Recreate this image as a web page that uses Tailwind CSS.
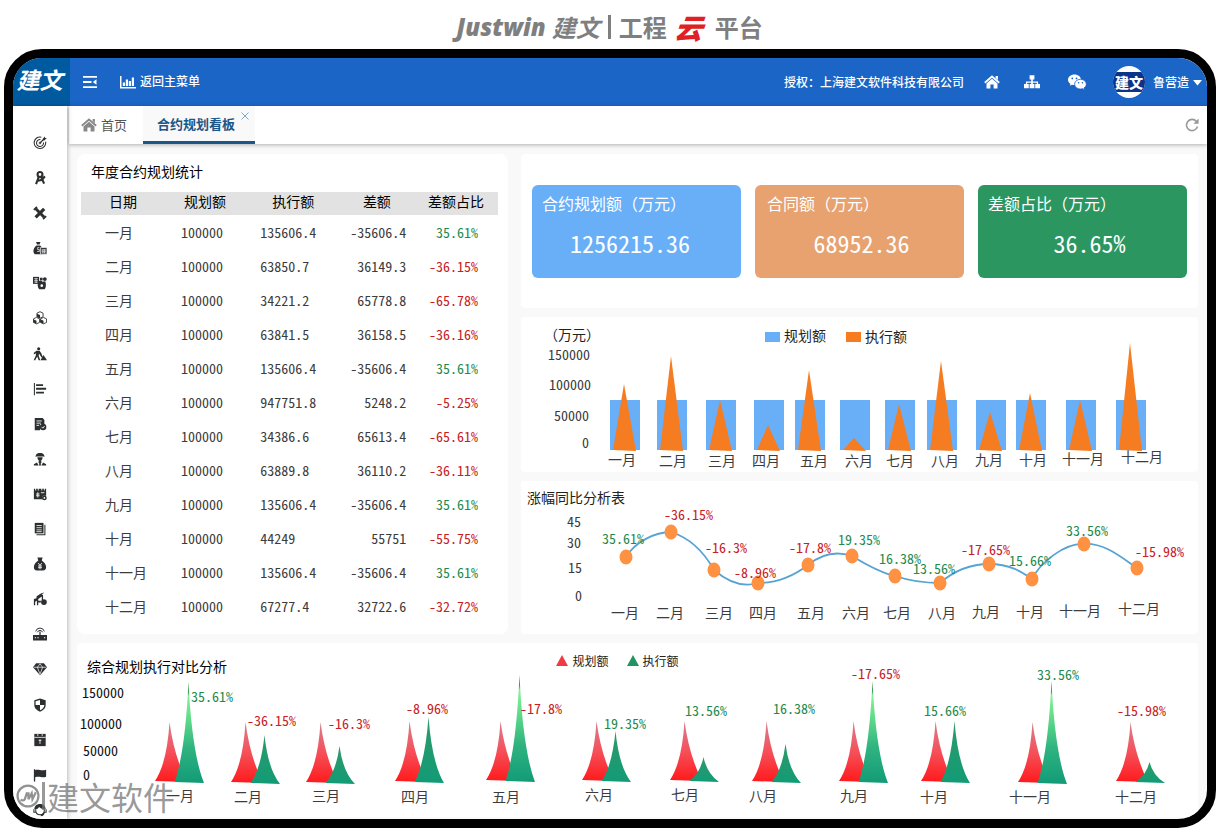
<!DOCTYPE html>
<html lang="zh-CN">
<head>
<meta charset="utf-8">
<meta name="viewport" content="width=device-width, initial-scale=1">
<title>Justwin 建文 | 工程云平台</title>
<script src="https://cdn.jsdelivr.net/npm/@tailwindcss/browser@4"></script>
</head>
<body class="flex min-h-screen flex-col bg-white font-['Noto_Sans_CJK_SC','Noto_Sans',sans-serif] text-[#333]">

<h1 class="flex h-[49px] shrink-0 items-center justify-center pt-1 pr-1 text-2xl leading-none font-bold text-[#7f7f7f]">
  <span class="font-['Open_Sans','Noto_Sans',sans-serif] font-extrabold italic">Justwin</span>
  <span class="ml-1.5 italic">建文</span>
  <span class="mx-2 h-6 w-[3px] bg-[#7f7f7f]"></span>
  <span>工程</span>
  <span class="mx-2 -skew-x-6 text-[28px] font-black text-[#e01f26] italic">云</span>
  <span class="ml-1">平台</span>
</h1>

<div class="relative mr-[7px] ml-1 flex flex-1 flex-col overflow-hidden rounded-[38px] border-[9px] border-black bg-[#f9f9f9]">

  <header class="flex h-12 shrink-0 items-center bg-[#1a65c5] text-xs font-medium text-white">
    <div class="flex h-full w-[57px] items-center justify-center bg-[#005a9f] pr-1 pb-1.5 text-[23px] leading-none font-bold italic">建文</div>
    <button class="ml-3 p-px" aria-label="折叠菜单">
      <svg class="h-3.5 w-3.5" viewBox="0 0 14 14" fill="currentColor"><path d="M0 1h14v1.800H0zM0 6.100h8.500v1.800H0zM0 11.200h14v1.800H0zM13.500 4.200v5.600L9.800 7z"/></svg>
    </button>
    <a href="#" class="ml-[22px] flex items-center gap-1">
      <svg class="h-3.5 w-4" viewBox="0 0 16 14" fill="currentColor"><path d="M0 1h1.500v11h14.500v1.500H0zM2.800 7.500h2.200V11H2.800zM5.800 4.500H8V11H5.800zM8.800 6H11v5H8.800zM11.800 2.500H14V11h-2.200z"/></svg>
      <span class="pb-0.5">返回主菜单</span>
    </a>
    <div class="ml-auto flex items-center pr-[5px]">
      <span class="pb-px">授权<span class="font-['Noto_Sans_CJK_TC',sans-serif]">：</span>上海建文软件科技有限公司</span>
      <a href="#" class="ml-5" aria-label="首页"><svg class="h-4 w-4" viewBox="0 0 16 16" fill="currentColor"><path d="M8 1.200 15.800 8 14.600 9.400 8 3.700 1.400 9.400.2 8zM11.600 2h2.300v4l-2.300-2zM8 4.700l5.500 4.700v5H9.600v-4H6.400v4H2.500v-5z"/></svg></a>
      <a href="#" class="ml-6" aria-label="组织架构"><svg class="h-4 w-4" viewBox="0 0 16 16" fill="currentColor"><path d="M5.600 1.200h4.800v4.400H8.800v1.800h5.300v2.600H16v4.300h-4.800V10h1.600V8.700h-4V10h1.600v4.300H5.600V10h1.600V8.700h-4V10h1.600v4.300H0V10h1.900V7.400h5.300V5.600H5.600z"/></svg></a>
      <a href="#" class="ml-[27px]" aria-label="微信"><svg class="h-[18px] w-5" viewBox="0 0 20 18"><path fill="#fff" d="M7.500 1.500C3.900 1.500 1 3.800 1 6.800c0 1.700.9 3.100 2.400 4.100l-.6 1.900 2.200-1.100c.8.200 1.600.3 2.500.3 3.600 0 6.500-2.300 6.500-5.200S11.100 1.500 7.500 1.500z"/><path fill="#fff" stroke="#1a65c5" stroke-width=".8" d="M13.500 6.300c-3.300 0-5.900 2.200-5.900 4.900s2.600 4.800 5.900 4.800c.7 0 1.400-.1 2-.3l2 1-.5-1.700c1.400-.9 2.300-2.300 2.300-3.800 0-2.700-2.600-4.900-5.800-4.900z"/><g fill="#1a65c5"><circle cx="5.300" cy="5.400" r=".9"/><circle cx="9.500" cy="5.400" r=".9"/><circle cx="11.600" cy="9.800" r=".8"/><circle cx="15.400" cy="9.800" r=".8"/></g></svg></a>
      <button class="ml-[26px] flex items-center gap-1">
        <span class="flex h-8 w-8 flex-col justify-center overflow-hidden rounded-full bg-white text-center">
          <span class="bg-[#0b3389] py-px text-sm leading-[18px] font-black whitespace-nowrap">建文</span>
        </span>
        <span class="ml-1 pb-px">鲁营造</span>
        <svg class="h-[7px] w-[9px]" viewBox="0 0 9 7" fill="currentColor"><path d="M0 1h9L4.500 6.500z"/></svg>
      </button>
    </div>
  </header>

  <div class="flex flex-1">
    <nav id="side" class="z-10 flex w-[54px] shrink-0 flex-col items-center justify-between bg-white pt-[30px] pb-0.5 text-[#2c2f30] shadow-[1px_0_4px_rgba(0,0,0,0.25)]" aria-label="主导航"></nav>

    <div class="ml-0.5 flex min-w-0 flex-1 flex-col">
      <div class="flex h-[38px] shrink-0 items-stretch bg-white text-[13px] shadow-[0_1px_4px_rgba(0,0,0,0.3)]">
        <a href="#" class="ml-3 flex items-center gap-1 text-[#555]">
          <svg class="h-4 w-4 text-[#888]" viewBox="0 0 16 16" fill="currentColor"><path d="M8 1.200 15.800 8 14.600 9.400 8 3.700 1.400 9.400.2 8zM11.600 2h2.300v4l-2.300-2zM8 4.700l5.500 4.700v5H9.600v-4H6.400v4H2.500v-5z"/></svg>
          <span class="pb-px">首页</span>
        </a>
        <div class="relative ml-4 flex w-28 items-center border-b-[3px] border-[#1b5788] bg-[#f9f9f9] pl-3.5 font-bold text-[#1b5788]">
          <a href="#">合约规划看板</a>
          <button class="absolute top-1.5 right-1.5" aria-label="关闭"><svg class="h-2 w-2" viewBox="0 0 8 8" stroke="#7ea8c8" fill="none"><path d="M.5.5l7 7M7.500.5l-7 7"/></svg></button>
        </div>
        <button class="mr-2 ml-auto" aria-label="刷新"><svg class="h-3.5 w-3.5" viewBox="0 0 14 14" fill="none" stroke="#999" stroke-width="1.600"><path d="M12.500 8.500A5.600 5.600 0 1 1 11.500 3.500"/><path fill="#999" stroke="none" d="M13.600.6v5.200H8.400z"/></svg></button>
      </div>

      <main class="flex flex-1 flex-col gap-[9px] pt-2.5 pr-[9px] pl-2 font-['Noto_Sans_Mono_CJK_SC','Noto_Sans_CJK_SC',monospace]">
        <div class="grid grid-cols-[431fr_677fr] gap-[13px]">

          <section class="rounded-lg bg-white px-1">
            <h2 class="flex h-[38px] items-center pb-1 pl-2.5 text-sm text-black">年度合约规划统计</h2>
            <table class="w-[417px] max-w-full table-fixed text-sm">
              <colgroup><col class="w-[24%]"><col class="w-[19%]"><col class="w-[19%]"><col class="w-[16%]"><col class="w-[22%]"></colgroup>
              <thead>
                <tr class="h-[23px] bg-[#e2e2e2] text-left leading-[19px] text-black">
                  <th class="pb-1 pl-7 font-normal">日期</th><th class="pb-1 pl-[3px] font-normal">规划额</th><th class="pb-1 pl-3 font-normal">执行额</th><th class="pb-1 pl-2 text-center font-normal">差额</th><th class="pb-1 pl-2 text-center font-normal">差额占比</th>
                </tr>
              </thead>
              <tbody id="rows"></tbody>
            </table>
          </section>

          <div class="flex flex-col gap-[9px]">
            <section class="flex h-[154px] items-center rounded bg-white px-[11px]">
              <div class="grid flex-1 grid-cols-3 gap-3.5 text-white">
                <div class="flex h-[93px] flex-col rounded-md bg-[#69aff8] px-2.5 pt-1.5"><h3 class="text-base">合约规划额（万元）</h3><p class="pt-3 pl-7 text-2xl">1256215.36</p></div>
                <div class="flex h-[93px] flex-col rounded-md bg-[#e7a270] px-3 pt-1.5"><h3 class="text-base">合同额（万元）</h3><p class="pt-3 pl-1 text-center text-2xl">68952.36</p></div>
                <div class="flex h-[93px] flex-col rounded-md bg-[#2b965f] px-2.5 pt-1.5"><h3 class="text-base">差额占比（万元）</h3><p class="pt-3 pl-3.5 text-center text-2xl">36.65%</p></div>
              </div>
            </section>
            <section class="rounded bg-white"><svg id="bars" class="block w-full overflow-visible" viewBox="521 317 677 155" role="img" aria-label="规划额与执行额"></svg></section>
            <section class="rounded bg-white">
              <h2 class="flex h-8 items-center pl-1.5 text-sm text-[#222]">涨幅同比分析表</h2>
              <svg id="line" class="block w-full overflow-visible" viewBox="521 513 677 121" role="img" aria-label="涨幅同比"></svg>
            </section>
          </div>
        </div>

        <section class="rounded bg-white">
          <div class="relative flex h-9 items-center pt-2.5 pl-2.5 text-black">
            <h2 class="text-sm">综合规划执行对比分析</h2>
            <ul class="absolute inset-x-0 top-2 flex justify-center gap-[18px] pr-10 text-xs leading-5 text-[#222]">
              <li class="flex items-center gap-1"><svg class="h-3 w-3" viewBox="0 0 12 12"><path d="M6 0l6 11H0z" fill="#f03b44"/></svg>规划额</li>
              <li class="flex items-center gap-1"><svg class="h-3 w-3" viewBox="0 0 12 12"><path d="M6 0l6 11H0z" fill="#23935f"/></svg>执行额</li>
            </ul>
          </div>
          <svg id="peaks" class="block w-full overflow-visible" viewBox="77 679 1121 138" role="img" aria-label="综合规划执行对比"></svg>
        </section>
      </main>
    </div>
  </div>

  <div class="pointer-events-none absolute bottom-[5px] left-[3px] z-20 flex items-center text-[32px] leading-9 text-[#777]/75">
    <svg class="h-6 w-6" viewBox="0 0 26 26" fill="none" stroke="#777" stroke-opacity=".8"><circle cx="13" cy="13" r="11.300" stroke-width="2.400"/><path stroke-width="2.400" d="M12 9l-2.500 7.500c-.8 1.800-3 1.500-4.500.5M13.500 9v7.500L17 10l.8 6.500L21.500 9"/></svg>
    <span class="mx-0.5 h-7 w-[3px] bg-[#777]/75"></span>
    <span>建文软件</span>
  </div>
</div>

<script>
const GREEN = '#1f8a4c', RED = '#c8201f', GREY = '#3c3c3c';
const months = ['一月','二月','三月','四月','五月','六月','七月','八月','九月','十月','十一月','十二月'];

const data = [
  ['135606.4','-35606.4','35.61%'],['63850.7','36149.3','-36.15%'],['34221.2','65778.8','-65.78%'],
  ['63841.5','36158.5','-36.16%'],['135606.4','-35606.4','35.61%'],['947751.8','5248.2','-5.25%'],
  ['34386.6','65613.4','-65.61%'],['63889.8','36110.2','-36.11%'],['135606.4','-35606.4','35.61%'],
  ['44249','55751','-55.75%'],['135606.4','-35606.4','35.61%'],['67277.4','32722.6','-32.72%']];
document.getElementById('rows').innerHTML = data.map((r, i) =>
  `<tr class="h-[34px] text-[#3c3c3c]"><td class="pl-6">${months[i]}</td><td>100000</td><td>${r[0]}</td><td class="text-right">${r[1]}</td>` +
  `<td class="pr-5 text-right ${r[2][0] === '-' ? 'text-[#c8201f]' : 'text-[#1f8a4c]'}">${r[2]}</td></tr>`).join('');

const text = (x, y, s, fill = GREY, anchor = 'start') =>
  `<text x="${x}" y="${y + 5}" font-size="14" fill="${fill}" text-anchor="${anchor}">${s}</text>`;
const pct = (x, y, s) => text(x, y, s, s[0] === '-' ? RED : GREEN);
const axis = list => list.map(([x, y], i) => text(x, y, months[i], GREY, 'middle')).join('');

/* planned bars with executed triangles */
const bars = [[610,384],[657,356],[706,400],[754,425],[795,370],[840,438],[885,404],[927,361],[976,412],[1016,393],[1066,400],[1116,343]];
document.getElementById('bars').innerHTML =
  text(544, 335, '（万元）', '#222') + text(548, 355, '150000') + text(549, 385, '100000') + text(554, 416, '50000') + text(582, 443, '0') +
  '<rect x="765" y="332" width="15" height="10" fill="#69aff8"/><rect x="846" y="332" width="15" height="10" fill="#f57c20"/>' +
  text(784, 336, '规划额', '#222') + text(865, 337, '执行额', '#222') +
  bars.map(([x, p]) => `<rect x="${x}" y="400" width="30" height="50" fill="#69aff8"/><path d="M${x + 14} ${p}L${x + 26} 451L${x + 3} 450z" fill="#f57c20"/>`).join('') +
  axis([[622,460],[673,461],[722,461],[766,461],[814,461],[859,461],[900,461],[945,461],[989,460],[1033,460],[1083,459],[1142,457]]);

/* growth line */
const dots = [[626,557],[671,532],[714,570],[758,583],[808,565],[852,556],[895,576],[940,583],[989,564],[1032,579],[1084,544],[1137,568]];
document.getElementById('line').innerHTML =
  '<path fill="none" stroke="#57a3d3" stroke-width="1.800" d="M626 557C635 542 655 532 671 532C690 538 704 552 714 570C728 582 742 588 758 583C780 583 795 575 808 565C825 551 840 552 852 556C865 564 882 573 895 576C910 581 925 583 940 583C955 570 972 564 989 564C1010 564 1022 572 1032 579C1040 563 1064 543 1084 544C1106 543 1122 558 1137 568"/>' +
  dots.map(([x, y]) => `<ellipse cx="${x}" cy="${y}" rx="6.500" ry="7.500" fill="#ff9143"/>`).join('') +
  text(567, 522, '45') + text(567, 543, '30') + text(568, 568, '15') + text(575, 596, '0') +
  [[602,539,'35.61%'],[664,515,'-36.15%'],[705,548,'-16.3%'],[734,573,'-8.96%'],[789,548,'-17.8%'],[838,540,'19.35%'],[879,559,'16.38%'],[913,569,'13.56%'],[961,550,'-17.65%'],[1009,561,'15.66%'],[1066,531,'33.56%'],[1135,552,'-15.98%']].map(a => pct(...a)).join('') +
  axis([[625,613],[670,613],[719,613],[763,613],[811,613],[856,613],[897,613],[942,613],[986,612],[1030,612],[1080,611],[1139,609]]);

/* planned / executed peaks: left edge, red top, green top, base */
const peaks = [[155,722,682,781],[231,722,735,782],[306,722,746,782],[395,721,717,781],[486,721,675,780],[582,721,731,780],[670,721,757,780],[752,721,744,781],[839,721,681,781],[921,721,721,781],[1018,722,681,782],[1116,722,762,781]];
document.getElementById('peaks').innerHTML =
  `<defs><linearGradient id="r" x2="0" y2="1"><stop stop-color="#d9808f"/><stop offset=".5" stop-color="#f5505a"/><stop offset="1" stop-color="#ff1a1c"/></linearGradient>
  <linearGradient id="tall" x2="0" y2="1"><stop stop-color="#1d7a48"/><stop offset=".1" stop-color="#3f9a5c"/><stop offset=".14" stop-color="#84f296"/><stop offset=".35" stop-color="#62dc8a"/><stop offset=".65" stop-color="#2fb380"/><stop offset="1" stop-color="#129b77"/></linearGradient>
  <linearGradient id="low" x2="0" y2="1"><stop stop-color="#2f9a68"/><stop offset="1" stop-color="#129b77"/></linearGradient></defs>` +
  peaks.map(([x, rt, gt, b]) => {
    const h = b - gt;
    return `<path fill="url(#r)" d="M${x} ${b}Q${x + 12} ${b - 18} ${x + 14.5} ${rt}Q${x + 19} ${b - 25} ${x + 32} ${b + 1}z"/>` +
      `<path fill="url(#${h > 80 ? 'tall' : 'low'})" d="M${x + 19.5} ${b + 1}Q${x + 30} ${b - h * .28} ${x + 33.5} ${gt}Q${x + 37} ${b - h * .28} ${x + 49} ${b + 2}z"/>`;
  }).join('') +
  text(82, 693, '150000', '#111') + text(80, 724, '100000', '#111') + text(83, 751, '50000', '#111') + text(83, 775, '0', '#111') +
  [[191,697,'35.61%'],[247,721,'-36.15%'],[328,724,'-16.3%'],[406,709,'-8.96%'],[520,709,'-17.8%'],[604,724,'19.35%'],[685,711,'13.56%'],[773,709,'16.38%'],[851,674,'-17.65%'],[924,711,'15.66%'],[1037,675,'33.56%'],[1117,711,'-15.98%']].map(a => pct(...a)).join('') +
  axis([[180,796],[248,797],[326,796],[415,797],[506,797],[599,795],[685,795],[763,796],[854,796],[934,797],[1030,797],[1136,797]]);

/* sidebar */
const icons = [
  ['目标', '<g fill="none" stroke="currentColor"><path d="M9.500 1.300A6.600 6.600 0 1 0 14.400 6.500M8.500 4A4 4 0 1 0 12 7.500" stroke-width="1.200"/><path d="M8 8l3.500-3.500" stroke-width="1.400"/><circle cx="8" cy="8" r="1"/></g><path d="M11 3.500l2.500-3 .4 1.800 1.900.4-3 2.500h-1.800z"/>'],
  ['设计', '<g fill="none" stroke="currentColor" stroke-width="2.400"><circle cx="8" cy="4" r="2.800"/><path d="M6.700 6.500L3.500 15M9.200 6.500l3.500 8M4.500 11.500l6-1.500 3-4"/></g>'],
  ['工具', '<g stroke="currentColor" fill="none"><path d="M3.200 3.200l9.600 9.600" stroke-width="3.400"/><path d="M12.800 3.200L3 13" stroke-width="3.600"/><path d="M1 4.500L4.500 1M11.500 15l3.500-3.500" stroke-width="2"/></g>'],
  ['预算', '<path d="M3.500 1h5L7.500 4h-3zM4 5h4c2 1.500 3 3.500 3 5v5H2C-.5 13 0 8 4 5z"/><path d="M8.500 7.500H16V15H8.500z" stroke="#fff" stroke-width=".8"/><path d="M9.500 10.200H15M9.500 12.400H15M11.300 9.500V14M13.300 9.500V14M7.200 7.500H5.300v2.300h2V12h-2.500" stroke="#fff" stroke-width=".8" fill="none"/>'],
  ['成本', '<path d="M0 1h7v8H0z"/><path d="M1.500 3h4M1.500 5h4M1.500 7h4M3.500 3v5" stroke="#fff" stroke-width=".8"/><path d="M6 6l3-1 2 1.500 3-.5c1.500 4 .5 9-1 9H7c-2-2-2-6-1-9z"/><circle cx="13.500" cy="3.500" r="2.200"/><path d="M8 2h3v3H8z"/><circle cx="10" cy="11" r="1.500" fill="#fff"/>'],
  ['物资', '<g fill="#fff" stroke="currentColor" stroke-width="1"><path d="M8 .8l3.500 1.700v4L8 8.200 4.500 6.500v-4z"/><path d="M4 7.300L7.500 9v4L4 14.700.5 13V9z"/><path d="M12 7.300L15.500 9v4L12 14.700 8.500 13V9z"/></g><path d="M4.500 3L8 4.500v3.700L4.500 6.500zM.5 9.500L4 11v3.700L.5 13zM8.500 9.500L12 11v3.700L8.500 13z"/>'],
  ['施工', '<circle cx="6.500" cy="2" r="1.800"/><path d="M4 4.200h3.500l2 3 1.500 4.300-1.200.4-3-4.400-.3 2.500 1.800 5H6.500L4.800 10.800 2.500 15H.8l2.500-5.500.2-2.500L1 8.500V6.500zM8.500 15l3.500-6 1.300 2 2.700 4z"/>'],
  ['进度', '<path d="M1 1h1.200v14H1zM3.500 2.500h8v2.200h-8zM3.500 6.700H15v2.200H3.500zM3.500 11h9v2.200h-9z"/>'],
  ['合同', '<path d="M2 1h9l2 2.500V8H8v7H2z"/><path d="M4 4.500h6M4 7h5M4 9.500h3" stroke="#fff"/><circle cx="11.500" cy="11.500" r="3.700"/><path d="M9.800 11.300l1.500 1.500 2-2.500" stroke="#fff" fill="none"/>'],
  ['劳务', '<path d="M3.500 3.500C4 .5 12 .5 12.500 3.500l1 1.500h-11zM5 6h6c0 2-1 4-3 4S5 8 5 6zM6.500 10h3v2.500l-1 .5h-1l-1-.5zM1 15.500V14l3.500-2 2 3.500zM15 15.500V14l-3.500-2-2 3.500zM7 13h2v2.500H7z"/>'],
  ['结算', '<path d="M1 2h14v8h-4v4H1z"/><path d="M3 1v3M6 1v3M10 1v3M13 1v3M3.500 8h4M5.500 6v6M3.500 10h4M9 6.500h4" stroke="#fff" fill="none"/><circle cx="13" cy="12.500" r="2.700"/><circle cx="13" cy="12.500" r="1" fill="#fff"/>'],
  ['文档', '<path d="M2 1h10v12H2z"/><path d="M13 3h1.200v12.200H4V14h9z"/><path d="M4 4h6M4 6.500h6M4 9h6M4 11h6" stroke="#fff" stroke-width=".9"/>'],
  ['资金', '<path d="M5 .5h6L10 4c3 2 5 5 5 7.500 0 3-2 4-3.500 4h-7C2.500 15.500 1 14.500 1 11.500 1 9 3 6 6 4z"/><path d="M6 7l2 2.500L10 7M8 9.500V14M5.800 10.300h4.400M5.800 12.200h4.400" stroke="#fff" fill="none"/>'],
  ['机械', '<path d="M1 8l3-1V5l6-4v2h1.500v6H10V5L6 8v2h3v2H6v3H4.500v-5L2.500 11v4H1z"/><path d="M5 5l7-4" stroke="currentColor"/><circle cx="12.500" cy="11.500" r="3.300"/>'],
  ['设备', '<path d="M0 9h16v6.500H0zM7.300 5h1.400v4.500H7.300z"/><g fill="none" stroke="currentColor"><path d="M3 5a5.200 5.200 0 0 1 10 0M5 6a3.200 3.200 0 0 1 6 0" stroke-width="1.100"/></g><path d="M2 12.200h1.500M5 12.200h1.500M12.500 12.200H14" stroke="#fff" stroke-width="1.200"/>'],
  ['质量', '<path d="M3.500 1.500h9L16 6l-8 9L0 6z"/><path d="M1 6h14M5 6l3 8 3-8M5 6l3-4 3 4" stroke="#fff" fill="none" stroke-width=".8"/>'],
  ['安全', '<path d="M8 .5l6.500 2V8c0 4-3.500 6.500-6.500 7.700C5 14.500 1.500 12 1.500 8V2.500z"/><path d="M8 2.300v5.700H3V3.700zM8 8h5c0 3-2.500 5-5 6z" fill="#fff"/>'],
  ['档案', '<path d="M1.500 1h13v14h-13z"/><path d="M1.500 5h13M5.500 1v2.500M10.500 1v2.500M8 7v5.500M6.500 8.500h3" stroke="#fff" stroke-width=".9"/>'],
  ['党建', '<path d="M1 1.500h1.500v14H1zM2.500 2.500c4-2 6 1.500 12.500-.5v8c-5 2-7-1.500-12.500.5z"/>'],
  ['客服', '<path d="M8 1c4 0 6.500 2.500 6.500 6H13C11 7 9 6.500 7 4.500 6 6.500 4.500 7 3 7H1.500C1.500 3.500 4 1 8 1z"/><path d="M3 7c0 4 2 6.500 5 6.500S13 11 13 7M1 7v3.500h2M15 7v3.500h-2c-.5 2.500-2 4-4 4" fill="none" stroke="currentColor" stroke-width="1.200"/>']
];
document.getElementById('side').innerHTML = icons.map(([name, d]) =>
  `<a href="#" class="block" aria-label="${name}"><svg class="h-3.5 w-3.5" viewBox="0 0 16 16" fill="currentColor">${d}</svg></a>`).join('');
</script>
</body>
</html>
